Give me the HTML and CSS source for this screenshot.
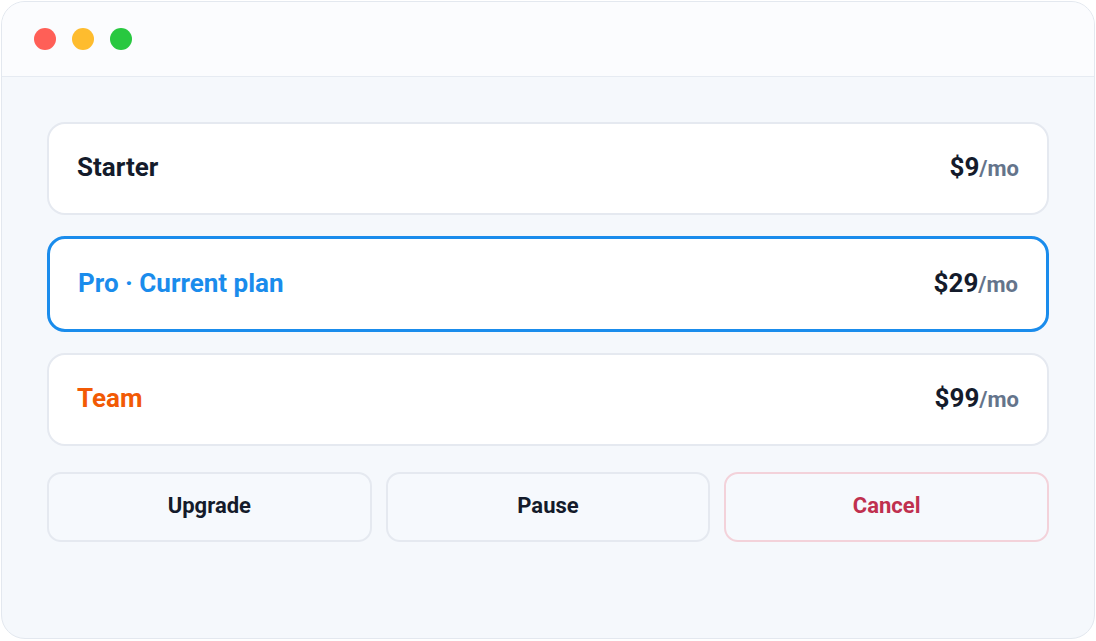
FILE: index.html
```html
<!DOCTYPE html>
<html lang="en">
<head>
<meta charset="utf-8">
<title>Plans</title>
<link rel="stylesheet" href="styles.css">
</head>
<body>
<div class="window">
  <header class="titlebar">
    <span class="dot dot-red"></span>
    <span class="dot dot-yellow"></span>
    <span class="dot dot-green"></span>
  </header>
  <main class="content">
    <div class="plan">
      <span class="plan-name">Starter</span>
      <span class="price">$9<span class="per">/mo</span></span>
    </div>
    <div class="plan plan-current">
      <span class="plan-name">Pro · Current plan</span>
      <span class="price">$29<span class="per">/mo</span></span>
    </div>
    <div class="plan plan-team">
      <span class="plan-name">Team</span>
      <span class="price">$99<span class="per">/mo</span></span>
    </div>
    <div class="actions">
      <button class="btn">Upgrade</button>
      <button class="btn">Pause</button>
      <button class="btn btn-danger">Cancel</button>
    </div>
  </main>
</div>
</body>
</html>
```

FILE: styles.css
```css
* { box-sizing: border-box; }
html, body { margin: 0; padding: 0; background: #ffffff; }
body {
  font-family: Roboto, "Liberation Sans", sans-serif;
  width: 1096px;
  height: 641px;
  padding: 1px 1px 2px 1px;
}
.window {
  width: 1094px;
  height: 638px;
  border: 1px solid #e3e8ef;
  border-radius: 24px;
  background: #f5f8fc;
  overflow: hidden;
  display: flex;
  flex-direction: column;
}
.titlebar {
  height: 75px;
  flex: none;
  background: #fbfcfe;
  border-bottom: 1px solid #e6ebf2;
  display: flex;
  align-items: center;
  gap: 16px;
  padding: 0 0 0 32px;
}
.dot { width: 22px; height: 22px; border-radius: 50%; display: block; }
.dot-red { background: #ff5f57; }
.dot-yellow { background: #febc2e; }
.dot-green { background: #28c840; }
.content {
  padding: 45px 45px 0 45px;
  display: flex;
  flex-direction: column;
  gap: 21px;
}
.plan {
  height: 93px;
  background: #ffffff;
  border: 2px solid #e5e9f0;
  border-radius: 18px;
  padding: 0 28px 3px 28px;
  display: flex;
  align-items: center;
  justify-content: space-between;
}
.plan-name {
  font-size: 26px;
  font-weight: 700;
  color: #141b2b;
}
.plan-current {
  height: 96px;
  border: 3px solid #1a8cec;
}
.plan-current .plan-name { color: #1a8cec; }
.plan-team .plan-name { color: #f25a05; }
.price {
  font-size: 26px;
  font-weight: 700;
  color: #141b2b;
}
.per {
  font-size: 22px;
  font-weight: 700;
  color: #64748b;
}
.actions {
  margin-top: 5px;
  display: grid;
  grid-template-columns: 1fr 1fr 1fr;
  gap: 14px;
}
.btn {
  height: 70px;
  padding: 0 0 3px 0;
  background: #f6f9fd;
  border: 2px solid #e5e9f0;
  border-radius: 14px;
  font-family: Roboto, "Liberation Sans", sans-serif;
  font-size: 22px;
  font-weight: 700;
  color: #141b2b;
}
.btn-danger {
  color: #c0304f;
  border-color: #f3d2da;
}
```
